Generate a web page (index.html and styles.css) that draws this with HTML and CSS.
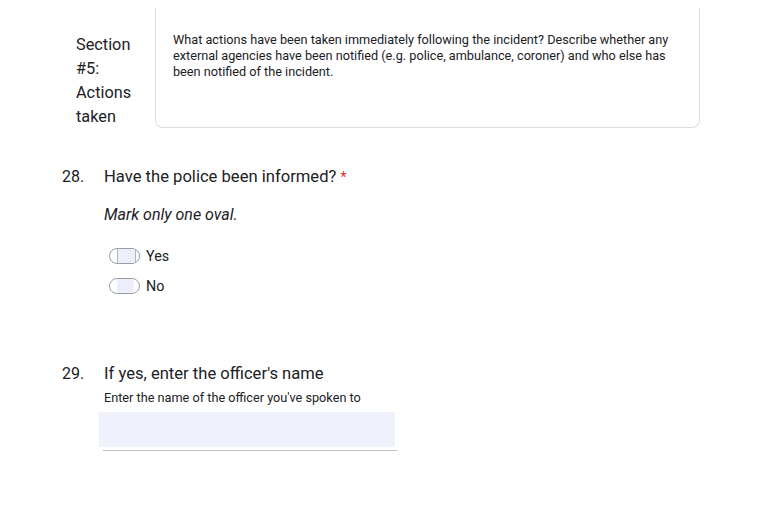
FILE: index.html
```html
<!DOCTYPE html>
<html>
<head>
<meta charset="utf-8">
<link rel="stylesheet" href="styles.css">
</head>
<body>
<div class="page">
  <div class="section-row">
    <div class="section-label">Section #5: Actions taken</div>
    <div class="section-card">What actions have been taken immediately following the incident? Describe whether any external agencies have been notified (e.g. police, ambulance, coroner) and who else has been notified of the incident.</div>
  </div>

  <div class="question q28">
    <div class="qnum">28.</div>
    <div class="qbody">
      <div class="qtitle">Have the police been informed? <span class="req">*</span></div>
      <div class="hint">Mark only one oval.</div>
      <div class="options">
        <div class="option"><span class="oval oval-yes"><span class="oval-fill"></span></span><span class="opt-label">Yes</span></div>
        <div class="option"><span class="oval oval-no"><span class="oval-fill"></span></span><span class="opt-label">No</span></div>
      </div>
    </div>
  </div>

  <div class="question q29">
    <div class="qnum">29.</div>
    <div class="qbody">
      <div class="qtitle">If yes, enter the officer's name</div>
      <div class="qdesc">Enter the name of the officer you've spoken to</div>
      <div class="input-box"></div>
      <div class="input-line"></div>
    </div>
  </div>
</div>
</body>
</html>
```

FILE: styles.css
```css
html, body {
  margin: 0;
  padding: 0;
  background: #ffffff;
}
body {
  font-family: Roboto, "Liberation Sans", Arial, sans-serif;
  color: #202124;
}
.page {
  width: 773px;
  height: 505px;
  overflow: hidden;
}
.section-row {
  display: flex;
  margin-top: 8px;
  padding-left: 76px;
}
.section-label {
  width: 79px;
  font-size: 16.3px;
  line-height: 24px;
  padding-top: 25px;
  box-sizing: border-box;
}
.section-card {
  width: 545px;
  height: 120px;
  box-sizing: border-box;
  border: 1px solid #dadce0;
  border-top: none;
  border-radius: 0 0 8px 8px;
  padding: 24px 16px 0 17px;
  font-size: 12.7px;
  line-height: 16px;
}
.question {
  display: flex;
  padding-left: 62px;
}
.q28 {
  margin-top: 36px;
}
.q29 {
  margin-top: 64px;
}
.qnum {
  width: 42px;
  font-size: 16px;
  line-height: 24px;
}
.qbody {
  flex: 1;
}
.qtitle {
  font-size: 16.6px;
  line-height: 24px;
}
.req {
  color: #d93025;
  font-size: 14px;
}
.hint {
  font-style: italic;
  font-size: 16px;
  line-height: 24px;
  margin-top: 14px;
}
.options {
  margin-top: 17px;
  display: flex;
  flex-direction: column;
  gap: 6px;
}
.option {
  display: flex;
  align-items: center;
  height: 24px;
  padding-left: 5px;
}
.oval {
  width: 31px;
  height: 16px;
  box-sizing: border-box;
  border: 1px solid #9a9ca0;
  border-radius: 8px;
  display: flex;
  overflow: hidden;
}
.oval-fill {
  margin-left: 7px;
  height: 100%;
  background: #eceefb;
  box-sizing: border-box;
}
.oval-yes .oval-fill {
  width: 19px;
  border-left: 1px solid #b4b6bd;
  border-right: 1px solid #b4b6bd;
}
.oval-no .oval-fill {
  width: 17px;
}
.opt-label {
  margin-left: 6px;
  font-size: 14.3px;
  line-height: 20px;
}
.qdesc {
  font-size: 12.7px;
  line-height: 16px;
  margin-top: 4px;
}
.input-box {
  margin-top: 6px;
  margin-left: -5px;
  width: 296px;
  height: 35px;
  background: #eff1fc;
}
.input-line {
  margin-top: 3px;
  margin-left: -1px;
  width: 294px;
  height: 1px;
  background: #bdc1c6;
}
```
